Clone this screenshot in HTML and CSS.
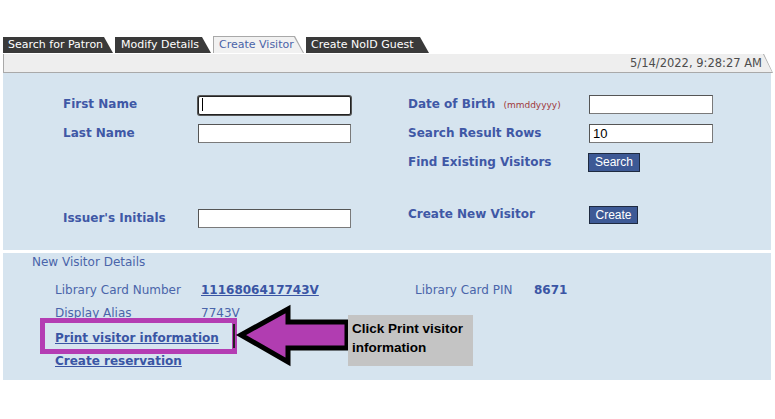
FILE: index.html
```html
<!DOCTYPE html>
<html lang="en">
  <head>
    <meta charset="UTF-8" />
    <meta name="viewport" content="width=device-width, initial-scale=1.0" />
    <title>Create Visitor</title>
    <link rel="stylesheet" href="styles.css">
  </head>
  <body>
    <div class="page">
      <div class="tabs">
        <div class="tab tab-patron">Search for Patron</div>
        <div class="tab tab-modify">Modify Details</div>
        <div class="tab tab-create active"><span>Create Visitor</span></div>
        <div class="tab tab-guest">Create NoID Guest</div>
      </div>
      <div class="datebar"><span>5/14/2022, 9:28:27 AM</span></div>

      <div class="panel search-panel">
        <div class="search-form">
          <div class="label">First Name</div>
          <div class="field"><input class="text focused" type="text"><span class="caret"></span></div>
          <div></div>
          <div class="label">Date of Birth <span class="hint">(mmddyyyy)</span></div>
          <input class="text short" type="text">

          <div class="label">Last Name</div>
          <input class="text" type="text">
          <div></div>
          <div class="label">Search Result Rows</div>
          <input class="text short" type="text" value="10">

          <div></div>
          <div></div>
          <div></div>
          <div class="label">Find Existing Visitors</div>
          <div><button class="btn btn-search">Search</button></div>

          <div class="label">Issuer's Initials</div>
          <input class="text" type="text">
          <div></div>
          <div class="label raise">Create New Visitor</div>
          <div><button class="btn btn-create">Create</button></div>
        </div>
      </div>

      <div class="panel details-panel">
        <div class="details-title">New Visitor Details</div>
        <div class="details-grid">
          <div class="dlabel">Library Card Number</div>
          <div><a class="card-number" href="#">1116806417743V</a></div>
          <div class="dlabel">Library Card PIN</div>
          <div class="pin">8671</div>

          <div class="dlabel">Display Alias</div>
          <div class="dlabel">7743V</div>
          <div></div>
          <div></div>

          <div class="wide"><a class="link" href="#">Print visitor information</a></div>
          <div class="wide"><a class="link" href="#">Create reservation</a></div>
        </div>
      </div>

      <div class="highlight"><div class="focus-ring"></div></div>
      <svg class="arrow" width="120" height="64" viewBox="0 0 120 64">
        <polygon points="6,31 53,5 53,18 112,18 112,44 53,44 53,58" fill="#b13db1" stroke="#000" stroke-width="5" stroke-linejoin="miter"/>
      </svg>
      <div class="callout">Click Print visitor<br>information</div>
    </div>
  </body>
</html>
```

FILE: styles.css
```css
body {
  margin: 0;
  background-color: #fff;
  font-family: "DejaVu Sans", Verdana, sans-serif;
}

.page {
  position: relative;
  width: 770px;
  padding: 37px 0 0 3px;
}

.tabs {
  display: flex;
  gap: 2px;
  height: 16px;
}

.tab {
  height: 16px;
  line-height: 16px;
  padding-left: 5px;
  font-size: 11px;
  color: #fff;
  background-color: #3a3a3a;
  clip-path: polygon(0 0, calc(100% - 9px) 0, 100% 100%, 0 100%);
  white-space: nowrap;
}

.tab-patron { width: 105px; }
.tab-modify { width: 90px; padding-left: 6px; }
.tab-guest { width: 118px; }

.tab.active {
  width: 91px;
  padding: 0;
  background-color: #a9a9a9;
  margin-top: -1px;
  height: 17px;
}

.tab.active span {
  display: block;
  height: 16px;
  margin: 1px 1px 0 1px;
  padding-left: 5px;
  color: #4a63a8;
  background-color: #f1f1f1;
  clip-path: polygon(0 0, calc(100% - 9px) 0, 100% 100%, 0 100%);
}

.datebar {
  width: 770px;
  height: 19px;
  background-color: #a9a9a9;
  clip-path: polygon(0 0, calc(100% - 9px) 0, 100% 100%, 0 100%);
}

.datebar span {
  display: block;
  height: 18px;
  margin: 1px 1px 0 1px;
  padding-right: 10px;
  line-height: 18px;
  text-align: right;
  font-size: 11.5px;
  color: #4d4d4d;
  background-color: #eeeeee;
  clip-path: polygon(0 0, calc(100% - 9px) 0, 100% 100%, 0 100%);
}

.panel {
  width: 768px;
  background-color: #d6e4ef;
}

.search-panel {
  padding: 22px 0 22px 0;
}

.search-form {
  display: grid;
  grid-template-columns: 135px 153px 57px 181px 124px;
  grid-template-rows: 29px 29px 56px 19px;
  padding-left: 60px;
}

.label {
  line-height: 19px;
  font-size: 12px;
  font-weight: bold;
  color: #3f58a6;
  white-space: nowrap;
}

.label.raise {
  margin-top: -4px;
}

.hint {
  font-size: 9px;
  font-weight: normal;
  color: #a0383a;
  margin-left: 4px;
}

.field {
  position: relative;
}

.text {
  box-sizing: border-box;
  width: 153px;
  height: 19px;
  margin: 0;
  padding: 0 3px;
  border: 1px solid #7a7a7a;
  border-top-color: #555;
  border-left-color: #555;
  background-color: #fff;
  font-family: "Liberation Sans", Arial, sans-serif;
  font-size: 13px;
}

.text.short {
  width: 124px;
}

.text.focused {
  border: 1px solid #222;
  border-radius: 2px;
  box-shadow: 0 0 0 1px #555;
}

.caret {
  position: absolute;
  left: 4px;
  top: 3px;
  width: 1px;
  height: 13px;
  background-color: #000;
}

.btn {
  display: block;
  box-sizing: border-box;
  height: 19px;
  margin: 0;
  padding: 0;
  border: 1px solid #1e2a40;
  background-color: #3d5995;
  color: #fff;
  font-family: "Liberation Sans", Arial, sans-serif;
  font-size: 12px;
  line-height: 17px;
}

.btn-search {
  width: 52px;
  margin-left: -1px;
}

.btn-create {
  width: 49px;
  height: 18px;
  margin-top: -3px;
  line-height: 16px;
}

.details-panel {
  margin-top: 3px;
  padding: 0 0 9px 0;
}

.details-title {
  padding-left: 29px;
  line-height: 18px;
  font-size: 12px;
  color: #4a64aa;
}

.details-grid {
  display: grid;
  grid-template-columns: 146px 214px 119px auto;
  grid-auto-rows: 23px;
  margin-top: 8px;
  padding-left: 52px;
}

.dlabel {
  line-height: 23px;
  font-size: 12px;
  color: #4a64aa;
}

.card-number,
.pin,
.link {
  line-height: 23px;
  font-size: 12px;
  font-weight: bold;
  color: #3a55a4;
}

.card-number,
.link {
  text-decoration: underline;
}

.wide {
  grid-column: 1 / -1;
  line-height: 23px;
}

.highlight {
  position: absolute;
  left: 40px;
  top: 318px;
  width: 197px;
  height: 36px;
  box-sizing: border-box;
  border: 5px solid #b43db3;
}

.focus-ring {
  position: absolute;
  left: 1px;
  top: 1px;
  width: 189px;
  height: 24px;
  border-right: 2px solid #222;
  box-sizing: border-box;
}

.arrow {
  position: absolute;
  left: 235px;
  top: 304px;
}

.callout {
  position: absolute;
  left: 348px;
  top: 315px;
  width: 121px;
  height: 47px;
  padding: 4px 0 0 4px;
  background-color: #c4c4c4;
  font-family: "Liberation Sans", Arial, sans-serif;
  font-size: 13.5px;
  font-weight: bold;
  line-height: 19px;
  color: #000;
}
```
